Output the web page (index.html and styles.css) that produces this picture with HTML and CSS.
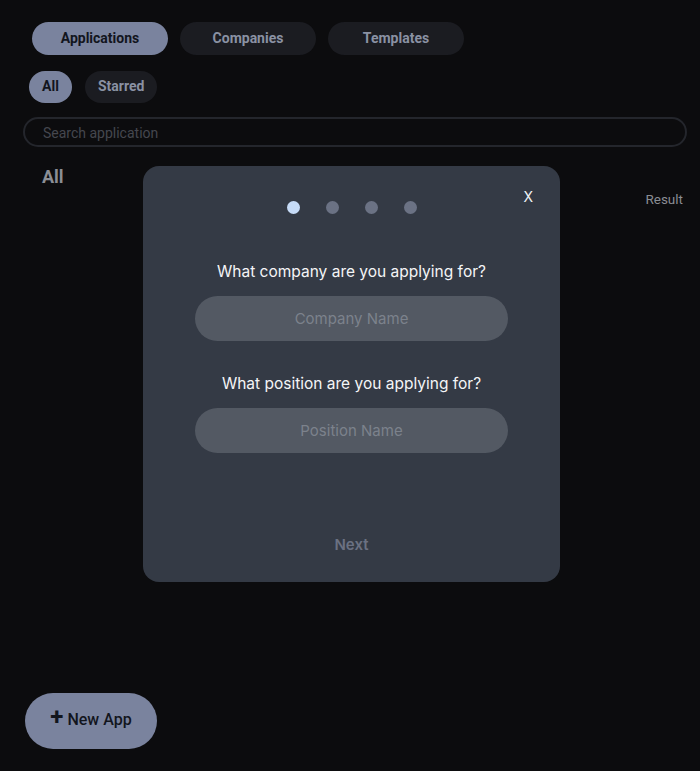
FILE: index.html
```html
<!DOCTYPE html>
<html>
<head>
<meta charset="utf-8">
<link rel="stylesheet" href="styles.css">
</head>
<body>
<div class="page">
  <nav class="tabs">
    <button class="tab tab-active">Applications</button>
    <button class="tab">Companies</button>
    <button class="tab">Templates</button>
  </nav>
  <div class="filters">
    <button class="chip chip-active">All</button>
    <button class="chip">Starred</button>
  </div>
  <div class="search">Search application</div>
  <div class="list-head">
    <h2 class="list-title">All</h2>
    <span class="result">Result</span>
  </div>
  <button class="new-app"><span class="plus">+</span> New App</button>
</div>

<div class="modal">
  <button class="close">X</button>
  <div class="dots">
    <span class="dot dot-active"></span>
    <span class="dot"></span>
    <span class="dot"></span>
    <span class="dot"></span>
  </div>
  <div class="fields">
    <label class="question">What company are you applying for?</label>
    <div class="field">Company Name</div>
    <label class="question q2">What position are you applying for?</label>
    <div class="field">Position Name</div>
  </div>
  <button class="next">Next</button>
</div>
</body>
</html>
```
FILE: styles.css
```css
* { box-sizing: border-box; }
html, body { margin: 0; padding: 0; }
body {
  background: #0c0c0e;
  width: 700px;
  height: 771px;
  overflow: hidden;
  font-family: Roboto, "Liberation Sans", sans-serif;
  position: relative;
}
button { font-family: inherit; border: none; cursor: pointer; }
.page {
  padding: 22px 13px 0 23px;
  height: 771px;
  display: flex;
  flex-direction: column;
}
.tabs {
  display: flex;
  gap: 12px;
  padding-left: 9px;
}
.tab {
  width: 136px;
  height: 33px;
  border-radius: 17px;
  background: #1b1c21;
  color: #8a91a3;
  font-size: 14px;
  font-weight: 700;
  padding-bottom: 2px;
}
.tab-active {
  background: #7a839e;
  color: #12151d;
}
.filters {
  display: flex;
  gap: 13px;
  margin-top: 16px;
  padding-left: 6px;
}
.chip {
  height: 32px;
  border-radius: 16px;
  background: #1b1c21;
  color: #8a91a3;
  font-size: 14px;
  font-weight: 700;
  padding: 0 13px 2px;
}
.chip-active {
  background: #7a839e;
  color: #12151d;
  width: 43px;
  padding: 0 0 2px;
}
.search {
  margin-top: 14px;
  height: 30px;
  border: 2px solid #24262c;
  border-radius: 15px;
  color: #45474e;
  font-size: 14px;
  padding: 6px 0 0 18px;
}
.list-head {
  display: flex;
  justify-content: space-between;
  align-items: flex-start;
  padding: 0 4px 0 19px;
  margin-top: 19px;
}
.list-title {
  margin: 0;
  font-size: 18px;
  font-weight: 700;
  color: #8b8e95;
}
.result {
  margin-top: 25px;
  font-size: 13.5px;
  color: #8a8d93;
}
.new-app {
  margin-top: auto;
  margin-bottom: 22px;
  margin-left: 2px;
  align-self: flex-start;
  width: 132px;
  height: 56px;
  border-radius: 28px;
  background: #7a839e;
  color: #12151d;
  font-size: 16px;
  font-weight: 500;
  display: flex;
  align-items: center;
  justify-content: center;
  gap: 4px;
  padding-bottom: 4px;
}
.plus { font-size: 24px; font-weight: 700; line-height: 1; margin-top: -6px; }

.modal {
  position: absolute;
  left: 143px;
  top: 166px;
  width: 417px;
  height: 416px;
  background: #343a45;
  border-radius: 16px;
  font-family: Inter, "Noto Sans", sans-serif;
  display: flex;
  flex-direction: column;
  align-items: center;
  padding-top: 35px;
}
.close {
  position: absolute;
  right: 27px;
  top: 22px;
  background: none;
  color: #f0f2f5;
  font-size: 14px;
  padding: 0;
  font-family: Inter, sans-serif;
}
.dots {
  display: flex;
  gap: 26px;
  margin-left: 1px;
}
.dot {
  width: 13px;
  height: 13px;
  border-radius: 50%;
  background: #6b7284;
}
.dot-active { background: #c6dbf7; }
.fields {
  display: flex;
  flex-direction: column;
  align-items: center;
  margin-top: 48px;
}
.question {
  color: #f4f5f7;
  font-size: 15.5px;
  line-height: 20px;
}
.q2 { margin-top: 33px; }
.field {
  margin-top: 14px;
  width: 313px;
  height: 45px;
  border-radius: 23px;
  background: #535963;
  color: #7c828c;
  font-size: 15px;
  display: flex;
  align-items: center;
  justify-content: center;
}
.next {
  margin-top: 81px;
  background: none;
  color: #6b7182;
  font-size: 15px;
  font-weight: 600;
  font-family: Inter, sans-serif;
}
```
